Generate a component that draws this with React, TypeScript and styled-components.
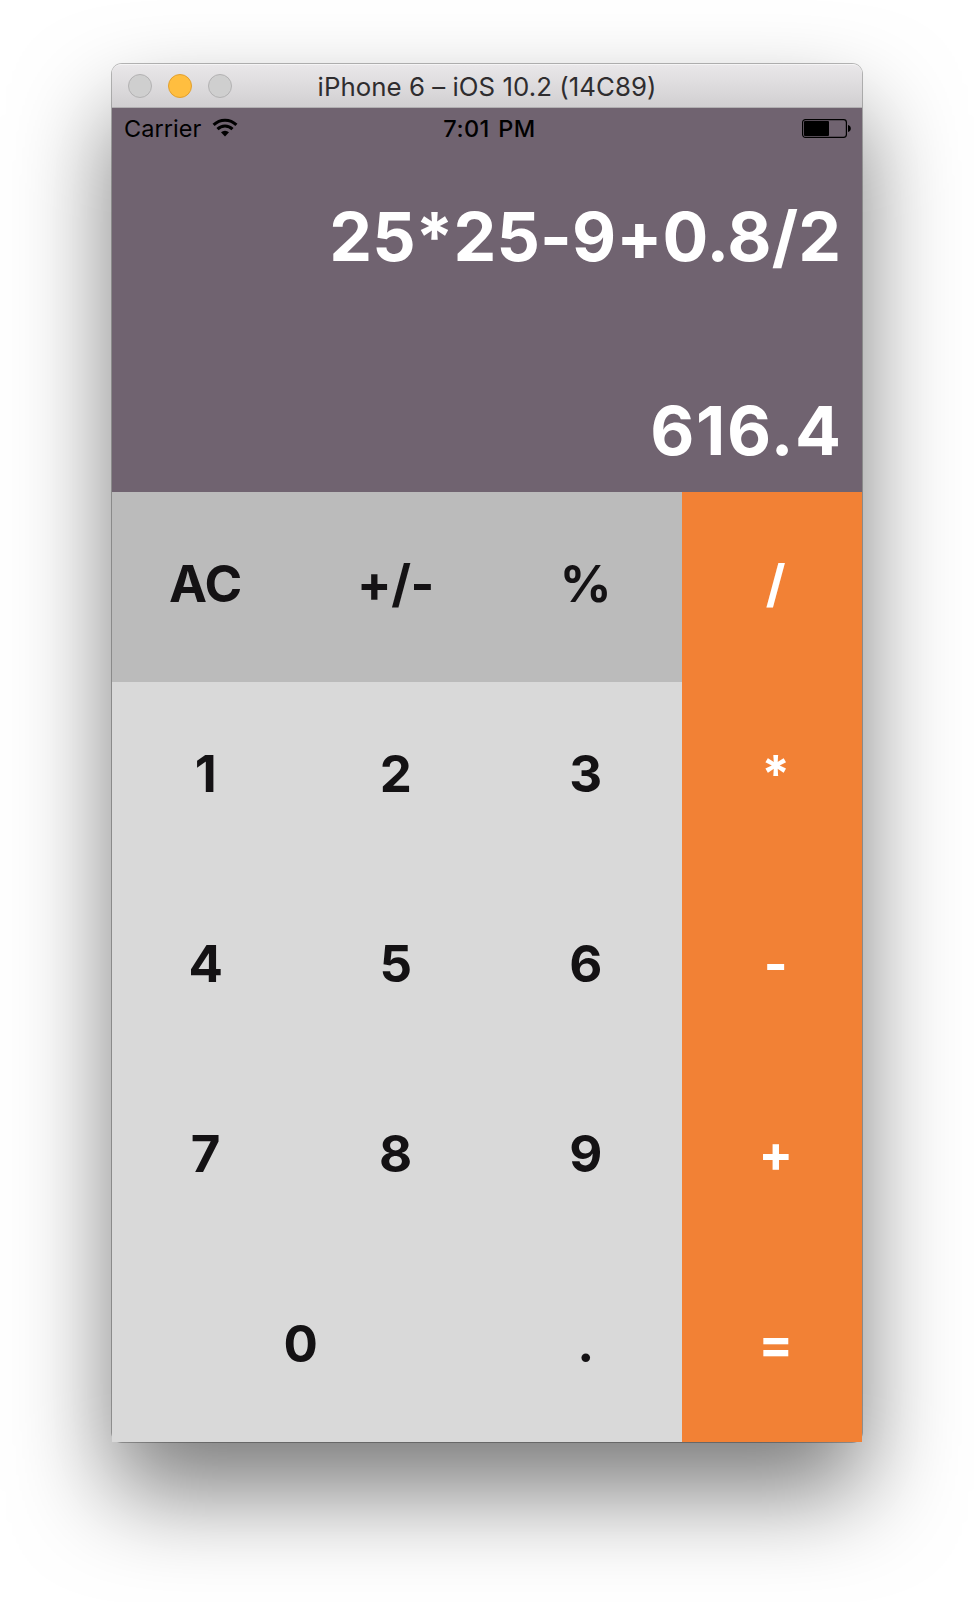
import React from "react";
import styled, { createGlobalStyle } from "styled-components";

const GlobalStyle = createGlobalStyle`
  * { box-sizing: border-box; }
  body {
    margin: 0;
    background: #fff;
    font-family: Inter, "Liberation Sans", sans-serif;
    font-feature-settings: "calt" 0;
  }
`;

const Desktop = styled.main`
  width: 974px;
  height: 1602px;
  padding: 64px 112px 160px;
  overflow: hidden;
`;

const Window = styled.section`
  width: 750px;
  height: 1378px;
  border-radius: 10px;
  box-shadow: 0 0 0 1px rgba(0, 0, 0, 0.27), 0 50px 96px rgba(0, 0, 0, 0.52);
`;

const TitleBar = styled.header`
  height: 44px;
  display: grid;
  grid-template-columns: 122px 1fr 122px;
  align-items: center;
  padding: 0 16px;
  border-radius: 9px 9px 0 0;
  background: linear-gradient(#e9e7e9, #d1cfd1);
  border-top: 1px solid #f5f4f5;
  border-bottom: 1px solid #b1afb1;
`;

const Lights = styled.div`
  display: flex;
  gap: 16px;
`;

const Light = styled.span<{ $active?: boolean }>`
  width: 24px;
  height: 24px;
  border-radius: 50%;
  background: ${(p) => (p.$active ? "#ffbe3f" : "#cfcfcf")};
  border: 1px solid ${(p) => (p.$active ? "#e2a02f" : "#b3b2b3")};
`;

const Title = styled.h1`
  margin: 0;
  padding-top: 2px;
  text-align: center;
  white-space: nowrap;
  font-size: 25.8px;
  font-weight: 400;
  line-height: 40px;
  letter-spacing: 0.05px;
  color: #2f2d2f;
`;

const Screen = styled.div`
  height: 1334px;
  overflow: hidden;
  background: #706370;
`;

const StatusBar = styled.div`
  height: 40px;
  display: grid;
  grid-template-columns: 1fr auto 1fr;
  align-items: center;
  padding: 0 11px 0 12px;
  color: #000;
  font-size: 23.5px;
  line-height: 38px;
`;

const Network = styled.div`
  display: flex;
  align-items: center;
  gap: 11px;
`;

const Carrier = styled.span`
  padding-top: 2px;
  letter-spacing: 0.05px;
`;

const Clock = styled.span`
  padding-top: 2px;
  font-weight: 500;
  letter-spacing: 0.4px;
  word-spacing: 2px;
  margin-left: 4px;
`;

const BatterySlot = styled.div`
  display: flex;
  justify-content: flex-end;
`;

const Display = styled.div`
  height: 344px;
  padding: 38px 21px 12px 0;
  display: flex;
  flex-direction: column;
  justify-content: space-between;
  align-items: flex-end;
`;

const Readout = styled.output<{ $spacing: number }>`
  font-size: 68px;
  font-weight: 700;
  line-height: 100px;
  letter-spacing: ${(p) => p.$spacing}px;
  margin-right: ${(p) => -p.$spacing}px;
  color: #fff;
  white-space: nowrap;
`;

const Keypad = styled.div`
  display: grid;
  grid-template-columns: repeat(4, 190px);
  grid-auto-rows: 190px;
`;

type Tone = "digit" | "function" | "operator";

const toneColors: Record<Tone, string> = {
  digit: "#d9d9d9",
  function: "#bbbbbb",
  operator: "#f28135",
};

const Key = styled.button<{ $tone: Tone; $wide?: boolean }>`
  grid-column: span ${(p) => (p.$wide ? 2 : 1)};
  border: 0;
  padding: 0 3px 6px 0;
  background: ${(p) => toneColors[p.$tone]};
  color: ${(p) => (p.$tone === "operator" ? "#fff" : "#141214")};
  font-family: inherit;
  font-feature-settings: inherit;
  font-size: 51px;
  font-weight: 700;
  line-height: 60px;
  letter-spacing: -0.4px;
`;

const WifiIcon = () => (
  <svg width="26" height="20" viewBox="0 0 26 20" aria-label="Wi-Fi">
    <g fill="none" stroke="#000" strokeWidth="3">
      <path d="M1.600 6.900a16.200 16.200 0 0 1 22.800 0" />
      <path d="M5.500 11.100a10.600 10.600 0 0 1 15 0" />
    </g>
    <path d="M13 18.500l-4-4.300a6 6 0 0 1 8 0z" />
  </svg>
);

const BatteryIcon = () => (
  <svg width="49" height="19" viewBox="0 0 49 19" aria-label="Battery">
    <rect x="0.6" y="0.6" width="43.8" height="17.8" rx="2.8" fill="none" stroke="#000" strokeWidth="1.2" />
    <rect x="2" y="2" width="25" height="15" rx="1" />
    <path d="M46 6c1.8.3 2.8 1.7 2.8 3.5s-1 3.200-2.800 3.500z" />
  </svg>
);

const keys: { label: string; tone: Tone; wide?: boolean }[] = [
  { label: "AC", tone: "function" },
  { label: "+/-", tone: "function" },
  { label: "%", tone: "function" },
  { label: "/", tone: "operator" },
  { label: "1", tone: "digit" },
  { label: "2", tone: "digit" },
  { label: "3", tone: "digit" },
  { label: "*", tone: "operator" },
  { label: "4", tone: "digit" },
  { label: "5", tone: "digit" },
  { label: "6", tone: "digit" },
  { label: "-", tone: "operator" },
  { label: "7", tone: "digit" },
  { label: "8", tone: "digit" },
  { label: "9", tone: "digit" },
  { label: "+", tone: "operator" },
  { label: "0", tone: "digit", wide: true },
  { label: ".", tone: "digit" },
  { label: "=", tone: "operator" },
];

export default function App() {
  return (
    <Desktop>
      <GlobalStyle />
      <Window>
        <TitleBar>
          <Lights>
            <Light />
            <Light $active />
            <Light />
          </Lights>
          <Title>iPhone 6 – iOS 10.2 (14C89)</Title>
        </TitleBar>
        <Screen>
          <StatusBar>
            <Network>
              <Carrier>Carrier</Carrier>
              <WifiIcon />
            </Network>
            <Clock>7:01 PM</Clock>
            <BatterySlot>
              <BatteryIcon />
            </BatterySlot>
          </StatusBar>
          <Display>
            <Readout $spacing={0.1}>25*25-9+0.8/2</Readout>
            <Readout $spacing={1.6}>616.4</Readout>
          </Display>
          <Keypad>
            {keys.map((key) => (
              <Key key={key.label} $tone={key.tone} $wide={key.wide}>
                {key.label}
              </Key>
            ))}
          </Keypad>
        </Screen>
      </Window>
    </Desktop>
  );
}
